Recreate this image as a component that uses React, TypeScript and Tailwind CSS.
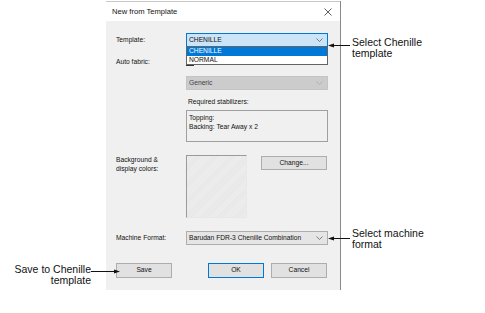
import React from 'react';

const dlgFont = { fontFamily: '"Liberation Sans", Arial, sans-serif' };

function Chevron({ color = '#606060' }: { color?: string }) {
  return (
    <svg width="7" height="4" viewBox="0 0 7 4" className="shrink-0">
      <polyline points="0.5,0.5 3.5,3.5 6.5,0.5" fill="none" stroke={color} strokeWidth="0.8" />
    </svg>
  );
}

// horizontal callout arrow, head on the left or right
function Arrow({ className, width, dir }: { className: string; width: number; dir: 'left' | 'right' }) {
  return (
    <svg width={width} height="7" viewBox={`0 0 ${width} 7`} className={`absolute ${className}`}>
      <line x1={dir === 'left' ? 4 : 0} y1="3.5" x2={dir === 'left' ? width : width - 4} y2="3.5" stroke="#111" strokeWidth="1" />
      {dir === 'left' ? (
        <polygon points="0,3.5 6,1.5 6,5.5" fill="#111" />
      ) : (
        <polygon points={`${width},3.5 ${width - 6},1.5 ${width - 6},5.5`} fill="#111" />
      )}
    </svg>
  );
}

function Button({ label, primary }: { label: string; primary?: boolean }) {
  return (
    <div
      className={`flex h-[15px] w-[56px] items-center justify-center border bg-[#e1e1e1] text-[6.7px] text-[#111] ${
        primary ? 'border-[#0078d7]' : 'border-[#adadad]'
      }`}
    >
      {label}
    </div>
  );
}

export default function App() {
  return (
    <div className="relative h-[313px] w-[485px] overflow-hidden bg-white" style={dlgFont}>
      {/* dialog */}
      <div className="ml-[106px] mt-[1px] w-[235px] border-r border-r-[#8a8a8a]">
        <div className="flex h-[20px] items-center justify-between border-t border-t-[#c8c8c8] bg-white pl-[6px] pr-[8px]">
          <span className="text-[7.6px] text-[#111]">New from Template</span>
          <svg width="8" height="8" viewBox="0 0 8 8">
            <line x1="0.5" y1="0.5" x2="7.5" y2="7.5" stroke="#333" strokeWidth="0.8" />
            <line x1="7.5" y1="0.5" x2="0.5" y2="7.5" stroke="#333" strokeWidth="0.8" />
          </svg>
        </div>

        <div className="flex flex-col bg-[#f0f0f0] pb-[12px] pl-[10px] pr-[12px] pt-[12px] text-[6.7px] text-[#111]">
          {/* Template */}
          <div className="relative z-10 flex h-[14px] items-center">
            <div className="w-[70px]">Template:</div>
            <div className="relative w-[142px]">
              <div className="flex h-[14px] items-center justify-between border border-[#0078d7] bg-[#cce4f7] pl-[2px] pr-[4px]">
                <span>CHENILLE</span>
                <Chevron />
              </div>
              <div className="absolute left-0 top-[13px] w-[142px] border border-[#646464] bg-white">
                <div className="flex h-[9px] items-center bg-[#0078d7] pl-[2px] text-white">CHENILLE</div>
                <div className="flex h-[8px] items-center pl-[2px]">NORMAL</div>
              </div>
            </div>
          </div>

          {/* Auto fabric */}
          <div className="mt-[10px] flex h-[11px] items-center">
            <div className="w-[70px]">Auto fabric:</div>
            <div className="flex items-center gap-[3px]">
              <div className="h-[8px] w-[8px] border border-[#333] bg-white" />
              <span>Use auto fabric</span>
            </div>
          </div>

          <div className="ml-[70px] mt-[8px] flex h-[14px] w-[142px] items-center justify-between border border-[#c4c4c4] bg-[#cccccc] pl-[2px] pr-[4px] text-[#444]">
            <span>Generic</span>
            <Chevron color="#a8a8a8" />
          </div>

          <div className="ml-[70px] mt-[8px] flex h-[9px] items-center pl-[2px]">Required stabilizers:</div>

          <div className="ml-[70px] mt-[3px] flex h-[32px] w-[142px] flex-col border border-[#9f9f9f] pl-[2px] pt-[2px] leading-[9px]">
            <span>Topping:</span>
            <span>Backing: Tear Away x 2</span>
          </div>

          {/* colours */}
          <div className="mt-[13px] flex h-[63px] items-start">
            <div className="w-[70px] leading-[9px]">
              Background &amp;
              <br />
              display colors:
            </div>
            <div className="h-[63px] w-[61px] border border-b-[#e8e8e8] border-l-[#9a9a9a] border-r-[#e8e8e8] border-t-[#9a9a9a] bg-[repeating-linear-gradient(135deg,#eeeeee_0px,#eeeeee_1px,#e7e7e7_1px,#e7e7e7_2px)]" />
            <div className="ml-[14px] mt-[1px] flex h-[14px] w-[66px] items-center justify-center border border-[#adadad] bg-[#e1e1e1]">
              Change...
            </div>
          </div>

          {/* machine format */}
          <div className="mt-[13px] flex h-[14px] items-center">
            <div className="w-[70px]">Machine Format:</div>
            <div className="flex h-[14px] w-[142px] items-center justify-between border border-[#adadad] bg-[#e5e5e5] pl-[2px] pr-[4px]">
              <span>Barudan FDR-3 Chenille Combination</span>
              <Chevron />
            </div>
          </div>

          {/* buttons */}
          <div className="mt-[18px] flex h-[15px] items-center">
            <Button label="Save" />
            <div className="ml-[36px] flex gap-[7px]">
              <Button label="OK" primary />
              <Button label="Cancel" />
            </div>
          </div>
        </div>
      </div>

      {/* callouts */}
      <div className="absolute left-[352px] top-[37px] text-[10.5px] leading-[11px] text-[#111]">
        Select Chenille
        <br />
        template
      </div>
      <Arrow className="left-[328px] top-[42px]" width={22} dir="left" />

      <div className="absolute left-[352px] top-[228px] text-[10.5px] leading-[11px] text-[#111]">
        Select machine
        <br />
        format
      </div>
      <Arrow className="left-[328px] top-[235px]" width={22} dir="left" />

      <div className="absolute right-[394px] top-[264px] text-right text-[10.5px] leading-[11px] text-[#111]">
        Save to Chenille
        <br />
        template
      </div>
      <Arrow className="left-[91px] top-[268px]" width={29} dir="right" />
    </div>
  );
}
